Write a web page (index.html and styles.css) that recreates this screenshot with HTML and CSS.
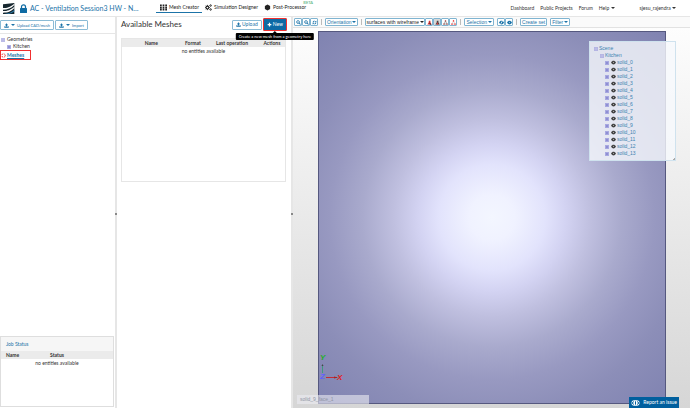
FILE: index.html
```html
<!DOCTYPE html>
<html lang="en">
<head>
<meta charset="utf-8">
<title>AC - Ventilation Session3 HW</title>
<link rel="stylesheet" href="styles.css">
</head>
<body>
<svg class="defs" aria-hidden="true">
  <symbol id="upload" viewBox="0 0 16 16"><path d="M8 1l5 6h-3v4H6V7H3zM1 10h3v2h8v-2h3v5H1z"/></symbol>
  <symbol id="magnify" viewBox="0 0 16 16"><circle cx="6.500" cy="6.500" r="4.500" fill="none" stroke="currentColor" stroke-width="2.500"/><path d="M9 11l2-2 4.500 4.500-2 2zM4 6h5v1.500H4z"/></symbol>
  <symbol id="refresh" viewBox="0 0 16 16"><path d="M2 7a6 6 0 0 1 10-3l2-2v5H9l2-2a4 4 0 0 0-6 2zM14 9a6 6 0 0 1-10 3l-2 2V9h5l-2 2a4 4 0 0 0 6-2z"/></symbol>
  <symbol id="eye" viewBox="0 0 16 16"><path d="M0 8c4-8 12-8 16 0-4 8-12 8-16 0z"/><circle cx="8" cy="8" r="1.500" fill="#fff"/></symbol>
  <symbol id="expand" viewBox="0 0 10 10"><path d="M1 1h8v8H1z" fill="#d3d3f5" stroke="#7b7bd0" stroke-width="1.500"/><path d="M3 5h4M5 3v4" stroke="#3434a4" stroke-width="1.500"/></symbol>
  <symbol id="collapse" viewBox="0 0 10 10"><path d="M1 1h8v8H1z" fill="#e8e8fb" stroke="#8b8bd4" stroke-width="1.500"/><path d="M3 5h4" stroke="#3434a4" stroke-width="1.500"/></symbol>
</svg>

<header class="topbar">
  <svg class="logo" viewBox="0 0 36 33"><path d="M0 4L34 0v33H0z" fill="#17272f"/><path d="M0 15c12 0 20-2 34-13v4C24 16 14 20 0 20zM0 24c14 0 22-3 34-13v4C24 26 14 29 0 29z" fill="#fff"/><path d="M4 33c14-1 22-5 30-12v4c-6 5-12 7-17 8z" fill="#2b83b5"/></svg>
  <svg class="lock" viewBox="0 0 14 18"><path d="M3 9V5.500a4 4 0 0 1 8 0V9" fill="none" stroke="#0f6ba3" stroke-width="2.500"/><rect y="8" width="14" height="10" rx="1" fill="#0f6ba3"/></svg>
  <h1 class="project">AC - Ventilation Session3 HW - N…</h1>
  <nav class="tabs">
    <a class="tab tab-active" href="#"><svg class="ico-tab" viewBox="0 0 16 16"><path d="M0 1h4v4H0zM6 1h4v4H6zM12 1h4v4h-4zM0 6h4v4H0zM6 6h4v4H6zM12 6h4v4h-4zM0 11h4v4H0zM6 11h4v4H6zM12 11h4v4h-4z"/></svg>Mesh Creator</a>
    <a class="tab" href="#"><svg class="ico-tab" viewBox="0 0 16 16"><g fill="none" stroke="currentColor"><circle cx="5.500" cy="8" r="3.200" stroke-width="2.400"/><path d="M5.500 2v3M5.500 11v3M0 8h2M9 8h2M1.500 4l2 2M7.500 10l2 2M9.500 4l-2 2M1.500 12l2-2" stroke-width="2"/><circle cx="12.800" cy="3.500" r="1.800" stroke-width="2"/><circle cx="12.800" cy="12.500" r="1.800" stroke-width="2"/></g></svg>Simulation Designer</a>
    <a class="tab" href="#"><svg class="ico-tab" viewBox="0 0 16 16"><path d="M8 1l6 3.500v7L8 15l-6-3.500v-7z"/></svg>Post-Processor<sup class="beta">BETA</sup></a>
  </nav>
  <nav class="links">
    <a href="#">Dashboard</a>
    <a href="#">Public Projects</a>
    <a href="#">Forum</a>
    <a href="#">Help <i class="caret"></i></a>
    <a class="user" href="#">sjesu_rajendra <i class="caret"></i></a>
  </nav>
</header>

<main class="workspace">
  <aside class="side">
    <div class="side-tools">
      <button class="btn"><svg><use href="#upload"/></svg><i class="caret"></i>Upload CAD/mesh</button>
      <button class="btn"><svg><use href="#upload"/></svg><i class="caret"></i>Import</button>
    </div>
    <ul class="project-tree">
      <li><svg><use href="#collapse"/></svg>Geometries</li>
      <li class="child"><svg><use href="#expand"/></svg>Kitchen</li>
      <li class="current"><svg viewBox="0 0 10 10"><circle cx="5" cy="5" r="3.500" fill="none" stroke="#e33" stroke-width="2" stroke-dasharray="3.500 2"/></svg><a href="#">Meshes</a></li>
    </ul>
    <section class="jobs">
      <h2>Job Status</h2>
      <table>
        <thead><tr><th class="job-name">Name</th><th>Status</th></tr></thead>
        <tbody><tr><td colspan="2">no entities available</td></tr></tbody>
      </table>
    </section>
  </aside>

  <section class="meshes">
    <div class="meshes-head">
      <h2>Available Meshes</h2>
      <button class="btn"><svg><use href="#upload"/></svg>Upload</button>
      <div class="new-wrap">
        <button class="btn btn-new"><svg viewBox="0 0 16 16"><path d="M6 2h4v4h4v4h-4v4H6v-4H2V6h4z"/></svg>New</button>
        <div class="tip" role="tooltip">Create a new mesh from a geometry here</div>
      </div>
    </div>
    <div class="mesh-list">
      <table>
        <thead><tr><th class="c-name">Name</th><th class="c-format">Format</th><th class="c-last">Last operation</th><th>Actions</th></tr></thead>
        <tbody><tr><td colspan="4">no entities available</td></tr></tbody>
      </table>
    </div>
  </section>

  <section class="viewer">
    <div class="toolbar">
      <div class="group">
        <button class="tool" aria-label="Zoom in"><svg><use href="#magnify"/></svg></button>
        <button class="tool" aria-label="Zoom out"><svg><use href="#magnify"/></svg></button>
        <button class="tool" aria-label="Reset"><svg><use href="#refresh"/></svg></button>
      </div>
      <i class="sep"></i>
      <button class="tool text">Orientation <i class="caret"></i></button>
      <i class="sep"></i>
      <div class="join">
        <div class="select-wrap"><select aria-label="Render mode"><option>surfaces with wireframe</option></select><i class="caret"></i></div>
        <div class="group">
          <button class="tool" aria-label="Pick volume"><svg viewBox="0 0 16 16"><path d="M6 2h5v5l4 7H1l4-5z" fill="#d83036"/><path d="M7 7l2 8h6z" fill="#333"/></svg></button>
          <button class="tool on" aria-label="Pick face"><svg viewBox="0 0 16 16"><path d="M6 2h5v5l4 7H1l4-5z" fill="#444"/><path d="M7 6l4 8H5z" fill="#e03036"/></svg></button>
          <button class="tool" aria-label="Pick edge"><svg viewBox="0 0 16 16"><path d="M8 3L3 13h10z" fill="none" stroke="#555" stroke-width="1.500"/><path d="M6 1h4v4H6zM1 11h4v4H1zM11 11h4v4h-4z" fill="#a44"/></svg></button>
          <button class="tool" aria-label="Pick node"><svg viewBox="0 0 16 16"><path d="M8 3L3 13h10z" fill="none" stroke="#a77" stroke-width="1"/><path d="M6 1h4v4H6zM1 11h4v4H1zM11 11h4v4h-4z" fill="#e22"/></svg></button>
        </div>
      </div>
      <i class="sep"></i>
      <button class="tool text">Selection <i class="caret"></i></button>
      <div class="group">
        <button class="tool" aria-label="Hide"><svg viewBox="0 0 16 16"><use href="#eye"/><path d="M4 15L12 1" stroke="#fff" stroke-width="2"/></svg></button>
        <button class="tool" aria-label="Show"><svg><use href="#eye"/></svg></button>
      </div>
      <i class="sep"></i>
      <button class="tool text">Create set</button>
      <button class="tool text">Filter <i class="caret"></i></button>
    </div>
    <div class="scene">
      <div class="surface"></div>
      <ul class="scene-tree">
        <li><svg><use href="#collapse"/></svg>Scene</li>
        <li class="lv1"><svg><use href="#collapse"/></svg>Kitchen</li>
        <li class="lv2"><svg><use href="#expand"/></svg><svg class="eye"><use href="#eye"/></svg>solid_0</li>
        <li class="lv2"><svg><use href="#expand"/></svg><svg class="eye"><use href="#eye"/></svg>solid_1</li>
        <li class="lv2"><svg><use href="#expand"/></svg><svg class="eye"><use href="#eye"/></svg>solid_2</li>
        <li class="lv2"><svg><use href="#expand"/></svg><svg class="eye"><use href="#eye"/></svg>solid_3</li>
        <li class="lv2"><svg><use href="#expand"/></svg><svg class="eye"><use href="#eye"/></svg>solid_4</li>
        <li class="lv2"><svg><use href="#expand"/></svg><svg class="eye"><use href="#eye"/></svg>solid_5</li>
        <li class="lv2"><svg><use href="#expand"/></svg><svg class="eye"><use href="#eye"/></svg>solid_6</li>
        <li class="lv2"><svg><use href="#expand"/></svg><svg class="eye"><use href="#eye"/></svg>solid_7</li>
        <li class="lv2"><svg><use href="#expand"/></svg><svg class="eye"><use href="#eye"/></svg>solid_8</li>
        <li class="lv2"><svg><use href="#expand"/></svg><svg class="eye"><use href="#eye"/></svg>solid_9</li>
        <li class="lv2"><svg><use href="#expand"/></svg><svg class="eye"><use href="#eye"/></svg>solid_10</li>
        <li class="lv2"><svg><use href="#expand"/></svg><svg class="eye"><use href="#eye"/></svg>solid_11</li>
        <li class="lv2"><svg><use href="#expand"/></svg><svg class="eye"><use href="#eye"/></svg>solid_12</li>
        <li class="lv2"><svg><use href="#expand"/></svg><svg class="eye"><use href="#eye"/></svg>solid_13</li>
      </ul>
      <svg class="axes" viewBox="0 0 24 30">
        <path d="M2.500 21V13" stroke="#3f9a80"/><path d="M1.500 14l1-2 1 2z" fill="#444"/>
        <path d="M6 25.500h11" stroke="#c42a35"/><path d="M14 24.500l4 1-4 1z" fill="#a22"/>
        <text x="0" y="8" fill="#1fb01f">Y</text><text x="0" y="27" fill="#6060ff">Z</text><text x="17" y="28" fill="#e02020">X</text>
      </svg>
      <div class="picked">solid_9_face_1</div>
    </div>
  </section>
</main>

<button class="report"><svg viewBox="0 0 26 18"><rect x="1" y="1" width="24" height="16" rx="8" fill="#fff"/><path d="M8 5a4 4 0 0 0 0 8M18 5a4 4 0 0 1 0 8M13 4v10" fill="none" stroke="#005f9e" stroke-width="3"/></svg>Report an issue</button>
</body>
</html>
```
FILE: styles.css
```css
* { box-sizing: border-box; }
body {
  margin: 0;
  height: 100vh;
  display: flex;
  flex-direction: column;
  overflow: hidden;
  background: #fff;
  color: #333;
  font: 5px/7px Lato, "Liberation Sans", sans-serif;
}
h1, h2, ul { margin: 0; padding: 0; font-weight: 400; }
ul { list-style: none; }
a { color: inherit; text-decoration: none; }
svg { width: 5px; height: 5px; flex: none; fill: currentColor; }
button { font: inherit; color: inherit; padding: 0; margin: 0; border: 0; background: none; white-space: nowrap; }
table { width: 100%; border-collapse: collapse; table-layout: fixed; font-size: 5px; }
th, td { padding: 0; height: 8px; text-align: center; white-space: nowrap; }
thead { background: #ebebeb; }
th { font-weight: 700; }
.defs { display: none; }
.caret {
  display: inline-block;
  flex: none;
  border: 2px solid transparent;
  border-top-color: currentColor;
  border-bottom: 0;
  vertical-align: middle;
}

/* Top bar */
.topbar { flex: none; display: flex; align-items: center; height: 17px; padding-left: 3px; border-bottom: 1px solid #e6e6e6; }
.logo { width: 12px; height: 11px; }
.lock { width: 7px; height: 9px; margin: 0 3px 0 5px; }
.project { width: 126px; font-size: 7px; line-height: 12px; color: #1c73a8; white-space: nowrap; }
.tabs { display: flex; align-items: flex-start; height: 11px; }
.tab { position: relative; display: flex; align-items: center; gap: 2px; height: 10px; padding: 0 3px; color: #222; white-space: nowrap; }
.tab-active { padding-left: 4px; border-bottom: 1px solid #1c73a8; }
.ico-tab { width: 7px; height: 7px; }
.beta { position: absolute; right: -4px; top: -3px; font-size: 4px; line-height: 5px; color: #3da86b; }
.links { display: flex; gap: 6px; margin-left: auto; padding-right: 14px; }
.user { margin-left: 19px; }

/* Panels */
.workspace { flex: 1; min-height: 0; display: grid; grid-template-columns: 117fr 176fr 397fr; }
.side, .meshes { position: relative; display: flex; flex-direction: column; min-width: 0; border-right: 2px solid #e6e6e6; }
.side::after, .meshes::after { content: ""; position: absolute; right: -2px; top: 50%; width: 2px; height: 2px; background: #888; }
.btn { display: flex; align-items: center; gap: 1px; height: 10px; padding: 0 3px; border: 1px solid #8abbd6; border-radius: 1px; background: #fff; color: #1c73a8; }

.side-tools { display: flex; gap: 1px; padding: 3px 0; border-bottom: 1px solid #e6e6e6; font-size: 4px; }
.side-tools .btn { gap: 2px; }
.project-tree { flex: 1; padding-top: 2px; }
.project-tree li { display: flex; align-items: center; gap: 2px; height: 7px; padding-left: 1px; }
.project-tree svg { width: 4px; height: 4px; }
.project-tree .child { padding-left: 7px; }
.project-tree .current { width: 31px; height: 10px; padding-left: 0; gap: 1px; border: 1px solid #f03030; font-weight: 700; color: #1c73a8; }
.project-tree .current svg { width: 5px; height: 5px; }
.current a { text-decoration: underline; }
.jobs { height: 71px; margin: 0 1px 1px 0; border: 1px solid #dedede; }
.jobs h2 { height: 14px; padding-left: 5px; line-height: 14px; font-size: 5px; color: #1c73a8; background: #f6f6f6; }
.job-name { width: 33px; padding-left: 5px; text-align: left; }
.jobs th:last-child { padding-right: 33px; }

.meshes { padding: 1px 4px 0; }
.meshes-head { display: flex; align-items: center; gap: 1px; margin-bottom: 7px; }
.meshes-head h2 { flex: 1; font-size: 8px; line-height: 13px; color: #333; white-space: nowrap; }
.new-wrap { position: relative; }
.btn-new { height: 13px; border-color: #f03030; background: #0d6aa5; color: #fff; }
.tip { position: absolute; z-index: 2; top: 15px; left: 50%; transform: translateX(-50%); padding: 0 3px; border-radius: 1px; background: #000; color: #fff; font-size: 4px; white-space: nowrap; }
.tip::before { content: ""; position: absolute; top: -2px; left: 50%; margin-left: -2px; border: 2px solid transparent; border-top: 0; border-bottom-color: #000; }
.mesh-list { height: 144px; margin-right: 1px; border: 1px solid #e6e6e6; }
.c-name { width: 36%; }
.c-format { width: 15%; }
.c-last { width: 33%; }

/* Viewer */
.viewer { display: flex; flex-direction: column; min-width: 0; font-family: "Liberation Sans", sans-serif; }
.toolbar { display: flex; align-items: center; gap: 3px; height: 11px; padding: 0 1px; background: #fafafa; border-bottom: 1px solid #e2e2e2; color: #1c73a8; }
.group, .join { display: flex; flex: none; }
.tool { display: flex; align-items: center; justify-content: center; gap: 1px; width: 8px; height: 8px; border: 1px solid #7fb4d1; border-radius: 1px; background: #fff; }
.tool.text { width: auto; padding: 0 1px; }
.on { background: #d8d8d8; }
.sep { width: 1px; height: 6px; background: #bbb; }
.select-wrap { position: relative; display: flex; align-items: center; color: #222; }
.select-wrap .caret { position: absolute; right: 1px; pointer-events: none; }
.select-wrap select { appearance: none; height: 8px; padding: 0 5px 0 0; border: 1px solid #7fb4d1; border-radius: 1px; background: #fff; color: inherit; font: inherit; }
.scene { position: relative; flex: 1; display: flex; padding: 3px 24px 4px 25px; background: linear-gradient(#fdfdfd, #d6d6d6); }
.surface {
  flex: 1;
  border: 1px solid #55587f;
  background: radial-gradient(circle farthest-corner at 50% 50%, #f3f6ff 0, #f0f2ff 9%, #e2e3fc 21%, #d3d3f2 29%, #bfbfdf 39%, #a9aacd 51%, #9899c1 64%, #8c8eb8 78%, #8083b1 100%);
}
.scene-tree { position: absolute; top: 13px; right: 14px; width: 87px; padding: 3px 4px; border: 1px solid #cfe2ee; background: rgba(246, 249, 252, .8); color: #3a82b0; }
.scene-tree::after { content: ""; position: absolute; right: 0; bottom: 0; width: 3px; height: 3px; background: linear-gradient(135deg, transparent 50%, #aaa 50%); }
.scene-tree li { display: flex; align-items: center; gap: 1px; height: 7px; }
.scene-tree svg { width: 4px; height: 4px; }
.scene-tree .lv1 { padding-left: 6px; }
.scene-tree .lv2 { padding-left: 11px; }
.scene-tree .eye { width: 5px; height: 5px; margin-left: 1px; color: #444; }
.axes { position: absolute; left: 27px; bottom: 26px; width: 24px; height: 30px; font: italic 700 8px "Liberation Sans", sans-serif; }
.picked { position: absolute; left: 4px; bottom: 4px; width: 72px; height: 9px; padding-left: 3px; line-height: 9px; background: rgba(235, 235, 242, .6); color: #9095a5; }
.report { position: fixed; right: 11px; bottom: 0; display: flex; align-items: center; gap: 3px; height: 11px; padding: 0 2px; background: #005f9e; color: #fff; }
.report svg { width: 9px; height: 6px; }
```
